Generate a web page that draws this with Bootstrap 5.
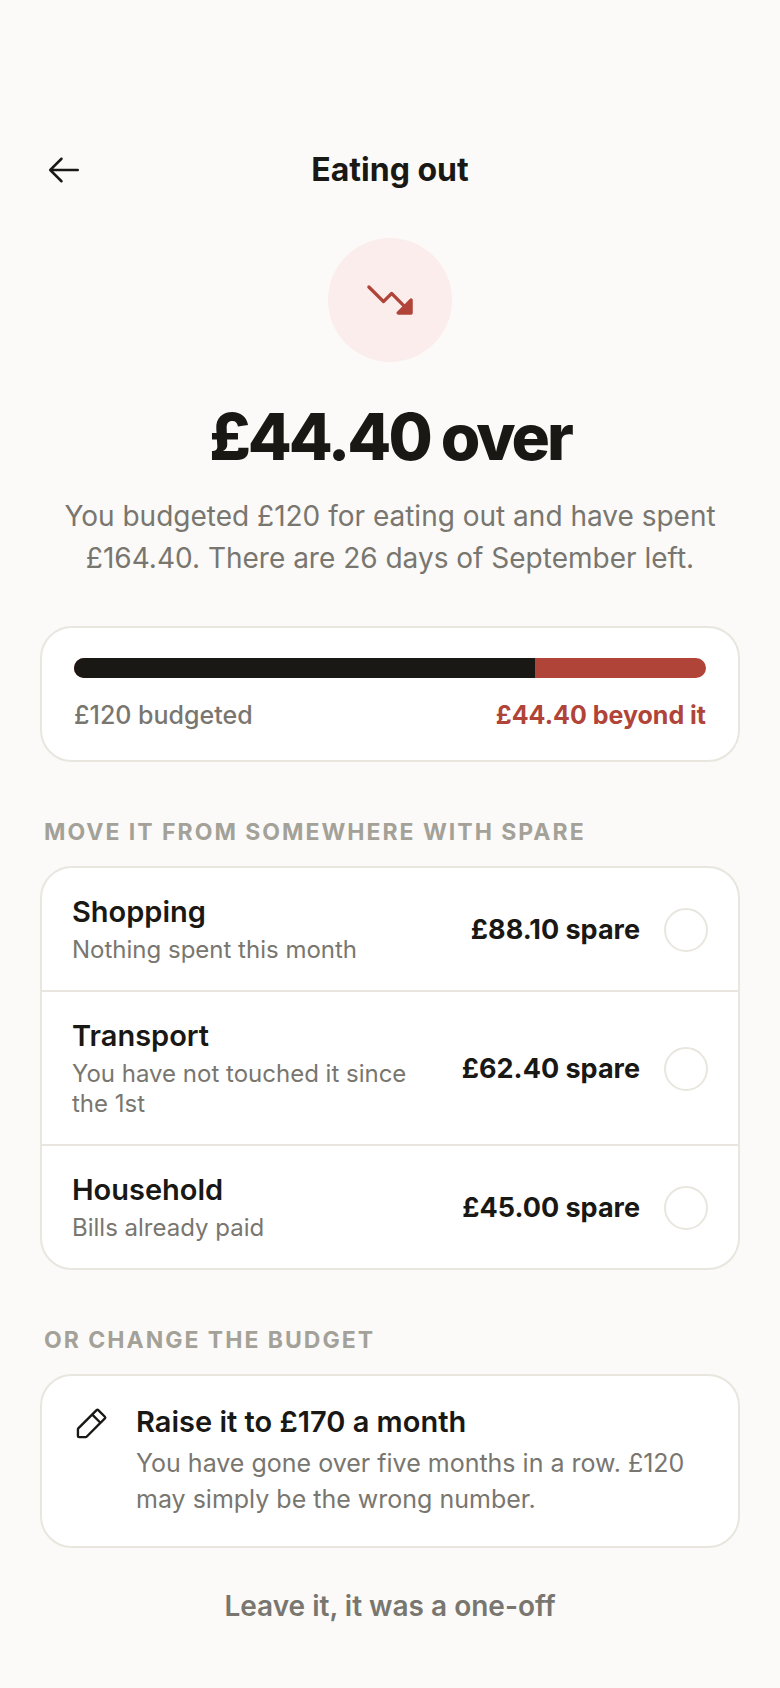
<!DOCTYPE html>
<html lang="en">
<head>
<meta charset="utf-8">
<meta name="viewport" content="width=device-width, initial-scale=1">
<title>Eating out</title>
<link href="https://cdn.jsdelivr.net/npm/bootstrap@5.3.0/dist/css/bootstrap.min.css" rel="stylesheet">
<style>
  :root { --ink: #191814; --muted: #78766f; --faint: #a3a198; --line: #e8e6de; --alert: #b04439; }
  body { background: #fbfaf8; color: var(--ink); font-family: Inter, "Liberation Sans", sans-serif; font-size: 24px; line-height: 30px; }
  .screen { padding: 140px 40px 40px; }
  .topbar { display: grid; grid-template-columns: 48px 1fr 48px; height: 60px; }
  .topbar h1 { font-size: 32px; line-height: 42px; font-weight: 700; }
  .back-btn { color: var(--ink); padding: 0 4px; border: 0; line-height: 0; }
  .trend-badge { width: 124px; height: 124px; margin-top: 38px; background: #fbedec; color: var(--alert); }
  .headline { font-size: 64px; line-height: 72px; font-weight: 800; letter-spacing: -3px; margin-top: 39px; }
  .summary { font-size: 28px; line-height: 42px; color: var(--muted); margin-top: 22px; }
  .panel { background: #fff; border: 2px solid var(--line); border-radius: 32px; overflow: hidden; }
  .meter-panel { padding: 30px 32px; margin-top: 47px; }
  .meter { height: 20px; border-radius: 10px; background: var(--alert); }
  .meter .progress-bar { background: var(--ink); }
  .meter-key { font-size: 25px; margin-top: 22px; font-weight: 500; color: var(--muted); }
  .over-note { font-weight: 700; color: var(--alert); }
  .group-label { font-size: 23px; line-height: 30px; font-weight: 700; letter-spacing: 2px; text-transform: uppercase; color: var(--faint); margin: 55px 4px 19px; }
  .source { padding: 27px 30px 25px; gap: 24px; cursor: pointer; }
  .source + .source { border-top: 2px solid var(--line); }
  .item-title { font-size: 29px; line-height: 34px; font-weight: 600; }
  .item-note { color: var(--muted); margin-top: 6px; }
  .amount { font-size: 27px; line-height: 34px; font-weight: 700; }
  .source .form-check-input { width: 44px; height: 44px; border: 2px solid var(--line); }
  .source .form-check-input:checked { background-color: var(--ink); border-color: var(--ink); }
  .raise { width: 100%; padding: 29px 30px; gap: 26px; color: var(--ink); }
  .raise .item-note { font-size: 25px; line-height: 36px; }
  .leave-btn { color: var(--muted); font-size: 28px; line-height: 36px; font-weight: 600; border: 0; padding: 10px 24px; margin-top: 30px; }
</style>
</head>
<body>
<main class="screen">
  <header class="topbar align-items-center">
    <button type="button" class="btn back-btn" aria-label="Back">
      <svg width="40" height="40" viewBox="0 0 256 256" fill="currentColor" aria-hidden="true"><path d="M224,128a8,8,0,0,1-8,8H59.31l58.35,58.34a8,8,0,0,1-11.32,11.32l-72-72a8,8,0,0,1,0-11.32l72-72a8,8,0,0,1,11.32,11.32L59.31,120H216A8,8,0,0,1,224,128Z"/></svg>
    </button>
    <h1 class="m-0 text-center">Eating out</h1>
  </header>

  <section class="text-center">
    <div class="trend-badge rounded-circle mx-auto d-flex align-items-center justify-content-center">
      <svg width="52" height="52" viewBox="0 0 256 256" fill="currentColor" aria-hidden="true"><path d="M240,128v64a8,8,0,0,1-8,8H168a8,8,0,0,1-5.66-13.66L188.69,160,136,107.31l-34.34,34.35a8,8,0,0,1-11.32,0l-72-72A8,8,0,0,1,29.66,58.34L96,124.69l34.34-34.35a8,8,0,0,1,11.32,0L200,148.69l26.34-26.35A8,8,0,0,1,240,128Z"/></svg>
    </div>
    <h2 class="headline mb-0">£44.40 over</h2>
    <p class="summary mb-0">You budgeted £120 for eating out and have spent £164.40. There are 26 days of September left.</p>
  </section>

  <section class="panel meter-panel">
    <div class="progress meter" role="progressbar" aria-label="Budget share of spending" aria-valuenow="73" aria-valuemin="0" aria-valuemax="100">
      <div class="progress-bar" style="width: 73%"></div>
    </div>
    <div class="meter-key d-flex justify-content-between">
      <span>£120 budgeted</span>
      <span class="over-note">£44.40 beyond it</span>
    </div>
  </section>

  <h3 class="group-label">Move it from somewhere with spare</h3>
  <section class="panel">
    <label class="source d-flex align-items-center" for="src-shopping">
      <span class="flex-grow-1">
        <span class="item-title d-block">Shopping</span>
        <span class="item-note d-block">Nothing spent this month</span>
      </span>
      <span class="amount text-nowrap">£88.10 spare</span>
      <input class="form-check-input m-0 flex-shrink-0" type="radio" name="source" id="src-shopping">
    </label>
    <label class="source d-flex align-items-center" for="src-transport">
      <span class="flex-grow-1">
        <span class="item-title d-block">Transport</span>
        <span class="item-note d-block">You have not touched it since the 1st</span>
      </span>
      <span class="amount text-nowrap">£62.40 spare</span>
      <input class="form-check-input m-0 flex-shrink-0" type="radio" name="source" id="src-transport">
    </label>
    <label class="source d-flex align-items-center" for="src-household">
      <span class="flex-grow-1">
        <span class="item-title d-block">Household</span>
        <span class="item-note d-block">Bills already paid</span>
      </span>
      <span class="amount text-nowrap">£45.00 spare</span>
      <input class="form-check-input m-0 flex-shrink-0" type="radio" name="source" id="src-household">
    </label>
  </section>

  <h3 class="group-label">Or change the budget</h3>
  <button type="button" class="panel raise d-flex align-items-start text-start">
    <svg class="flex-shrink-0" width="38" height="38" viewBox="0 0 256 256" fill="currentColor" aria-hidden="true"><path d="M227.31,73.37,182.63,28.68a16,16,0,0,0-22.63,0L36.69,152A15.86,15.86,0,0,0,32,163.31V208a16,16,0,0,0,16,16H92.69A15.86,15.86,0,0,0,104,219.31L227.31,96a16,16,0,0,0,0-22.63ZM92.69,208H48V163.31l88-88L180.69,120ZM192,108.68,147.31,64l24-24L216,84.68Z"/></svg>
    <span>
      <span class="item-title d-block">Raise it to £170 a month</span>
      <span class="item-note d-block">You have gone over five months in a row. £120 may simply be the wrong number.</span>
    </span>
  </button>

  <div class="text-center">
    <button type="button" class="btn leave-btn">Leave it, it was a one-off</button>
  </div>
</main>
<script src="https://cdn.jsdelivr.net/npm/bootstrap@5.3.0/dist/js/bootstrap.bundle.min.js"></script>
</body>
</html>
